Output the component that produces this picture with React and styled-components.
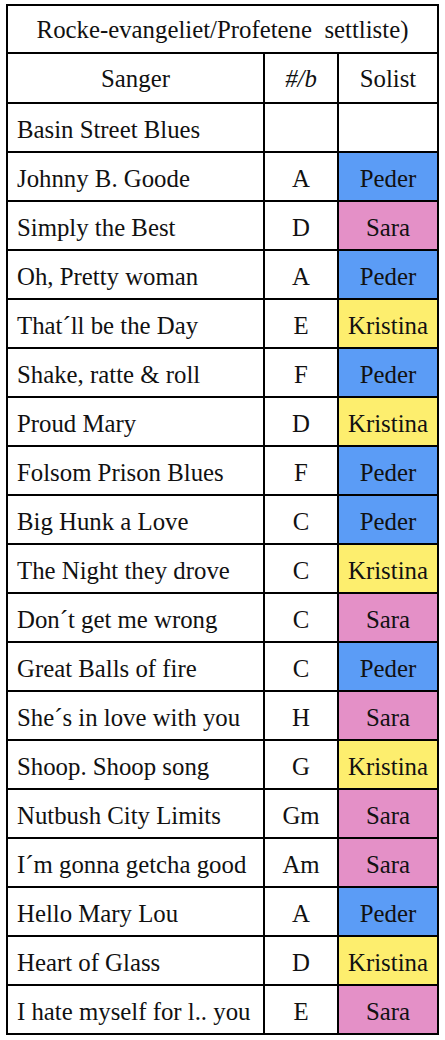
import React from "react";
import styled, { createGlobalStyle } from "styled-components";

const Global = createGlobalStyle`
  html, body { margin: 0; padding: 0; background: #fff; }
  body { font-family: "Liberation Serif", "Times New Roman", serif; color: #111; }
`;

const Page = styled.div`
  padding: 4px 6px;
`;

const Sheet = styled.div`
  display: grid;
  grid-template-columns: 255px 72px 98px;
  grid-template-rows: 46px 48px;
  grid-auto-rows: 47px;
  gap: 2px;
  padding: 2px;
  width: 433px;
  box-sizing: border-box;
  background: #000;
`;

const Title = styled.div`
  grid-column: 1 / span 3;
  background: #fff;
  display: flex;
  align-items: center;
  justify-content: center;
  font-size: 24.8px;
  white-space: pre;
  padding-top: 2px;
`;

const Cell = styled.div`
  background: ${(p) => p.$bg || "#fff"};
  display: flex;
  align-items: center;
  justify-content: ${(p) => (p.$center ? "center" : "flex-start")};
  padding-left: ${(p) => (p.$center ? "0" : "9px")};
  padding-top: ${(p) => (p.$head ? "2px" : "5px")};
  font-size: 24.8px;
  font-style: ${(p) => (p.$italic ? "italic" : "normal")};
  white-space: nowrap;
  overflow: hidden;
`;

const COLORS = {
  Peder: "#5b9cf6",
  Sara: "#e490c7",
  Kristina: "#fdee6e",
};

const rows = [
  ["Basin Street Blues", "", ""],
  ["Johnny B. Goode", "A", "Peder"],
  ["Simply the Best", "D", "Sara"],
  ["Oh, Pretty woman", "A", "Peder"],
  ["That´ll be the Day", "E", "Kristina"],
  ["Shake, ratte & roll", "F", "Peder"],
  ["Proud Mary", "D", "Kristina"],
  ["Folsom Prison Blues", "F", "Peder"],
  ["Big Hunk a Love", "C", "Peder"],
  ["The Night they drove", "C", "Kristina"],
  ["Don´t get me wrong", "C", "Sara"],
  ["Great Balls of fire", "C", "Peder"],
  ["She´s in love with you", "H", "Sara"],
  ["Shoop. Shoop song", "G", "Kristina"],
  ["Nutbush City Limits", "Gm", "Sara"],
  ["I´m gonna getcha good", "Am", "Sara"],
  ["Hello Mary Lou", "A", "Peder"],
  ["Heart of Glass", "D", "Kristina"],
  ["I hate myself for l.. you", "E", "Sara"],
];

export default function App() {
  return (
    <Page>
      <Global />
      <Sheet>
        <Title>{"Rocke-evangeliet/Profetene  settliste)"}</Title>
        <Cell $center $head>Sanger</Cell>
        <Cell $center $head $italic>#/b</Cell>
        <Cell $center $head>Solist</Cell>
        {rows.map(([song, key, solist], i) => (
          <React.Fragment key={i}>
            <Cell>{song}</Cell>
            <Cell $center>{key}</Cell>
            <Cell $center $bg={COLORS[solist]}>{solist}</Cell>
          </React.Fragment>
        ))}
      </Sheet>
    </Page>
  );
}
